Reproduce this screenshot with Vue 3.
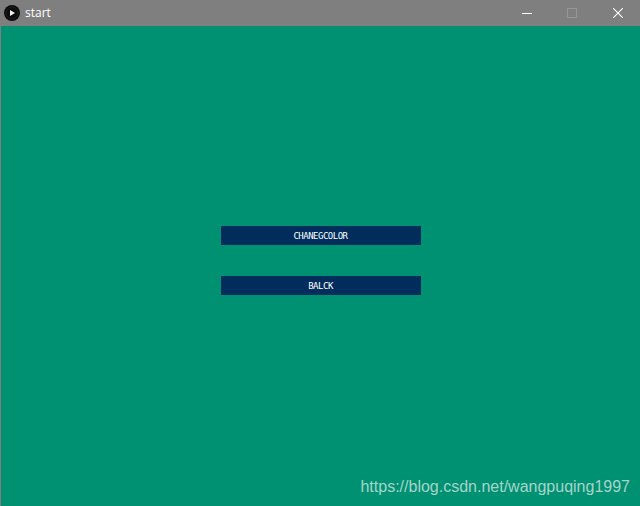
<script setup>
const buttons = ['CHANEGCOLOR', 'BALCK']
</script>

<template>
  <div class="window">
    <header class="titlebar">
      <svg class="app-icon" width="16" height="16" viewBox="0 0 16 16">
        <circle cx="8" cy="8" r="8" fill="#0c0c0c" />
        <circle cx="8" cy="8" r="6" fill="none" stroke="#2a2a2a" stroke-width="0.6" />
        <path d="M6 5 L11 8 L6 11 Z" fill="#f2f2f2" />
      </svg>
      <span class="title">start</span>
      <div class="controls">
        <span class="control minimize">
          <svg width="10" height="10" viewBox="0 0 10 10"><path d="M0 5.5H10" stroke="#fff" stroke-width="1" /></svg>
        </span>
        <span class="control">
          <svg width="10" height="10" viewBox="0 0 10 10"><rect x="0.5" y="0.5" width="9" height="9" fill="none" stroke="#969696" stroke-width="1" /></svg>
        </span>
        <span class="control close">
          <svg width="10" height="10" viewBox="0 0 10 10"><path d="M0 0L10 10M10 0L0 10" stroke="#fff" stroke-width="1.1" /></svg>
        </span>
      </div>
    </header>
    <main class="canvas">
      <button v-for="label in buttons" :key="label" class="btn" type="button">{{ label }}</button>
      <span class="watermark">https://blog.csdn.net/wangpuqing1997</span>
    </main>
  </div>
</template>

<style>
html, body { margin: 0; padding: 0; background: #009173; overflow: hidden; }
</style>

<style scoped>
.window {
  width: 640px;
  height: 506px;
  display: flex;
  flex-direction: column;
  overflow: hidden;
}
.titlebar {
  height: 26px;
  flex: none;
  display: flex;
  align-items: center;
  background: #7f7f7f;
  padding-left: 4px;
  box-sizing: border-box;
  font-family: "Open Sans", "Noto Sans", sans-serif;
}
.app-icon { flex: none; margin-top: -1px; }
.title {
  margin-left: 5px;
  color: #fff;
  font-size: 12px;
  line-height: 26px;
}
.controls {
  margin-left: auto;
  display: flex;
  height: 26px;
  margin-right: -1px;
}
.control {
  width: 46px;
  display: flex;
  align-items: center;
  justify-content: center;
}
.minimize { width: 45px; }
.canvas {
  position: relative;
  flex: 1;
  box-sizing: border-box;
  border-left: 1px solid #7f7f7f;
  padding: 200px 0 0 220px;
  background: #009173;
  display: flex;
  flex-direction: column;
  align-items: flex-start;
  gap: 31px;
}
.btn {
  width: 200px;
  height: 19px;
  padding: 1px 1px 0 0;
  border: 0;
  background: #002d5c;
  color: #fff;
  font-family: "DejaVu Sans Mono", monospace;
  font-size: 9px;
  letter-spacing: -0.5px;
  line-height: 18px;
  text-align: center;
}
.watermark {
  position: absolute;
  right: 10px;
  bottom: 9px;
  font-family: "Liberation Sans", Arial, sans-serif;
  font-size: 16px;
  line-height: 20px;
  color: #a5d5ca;
}
</style>
